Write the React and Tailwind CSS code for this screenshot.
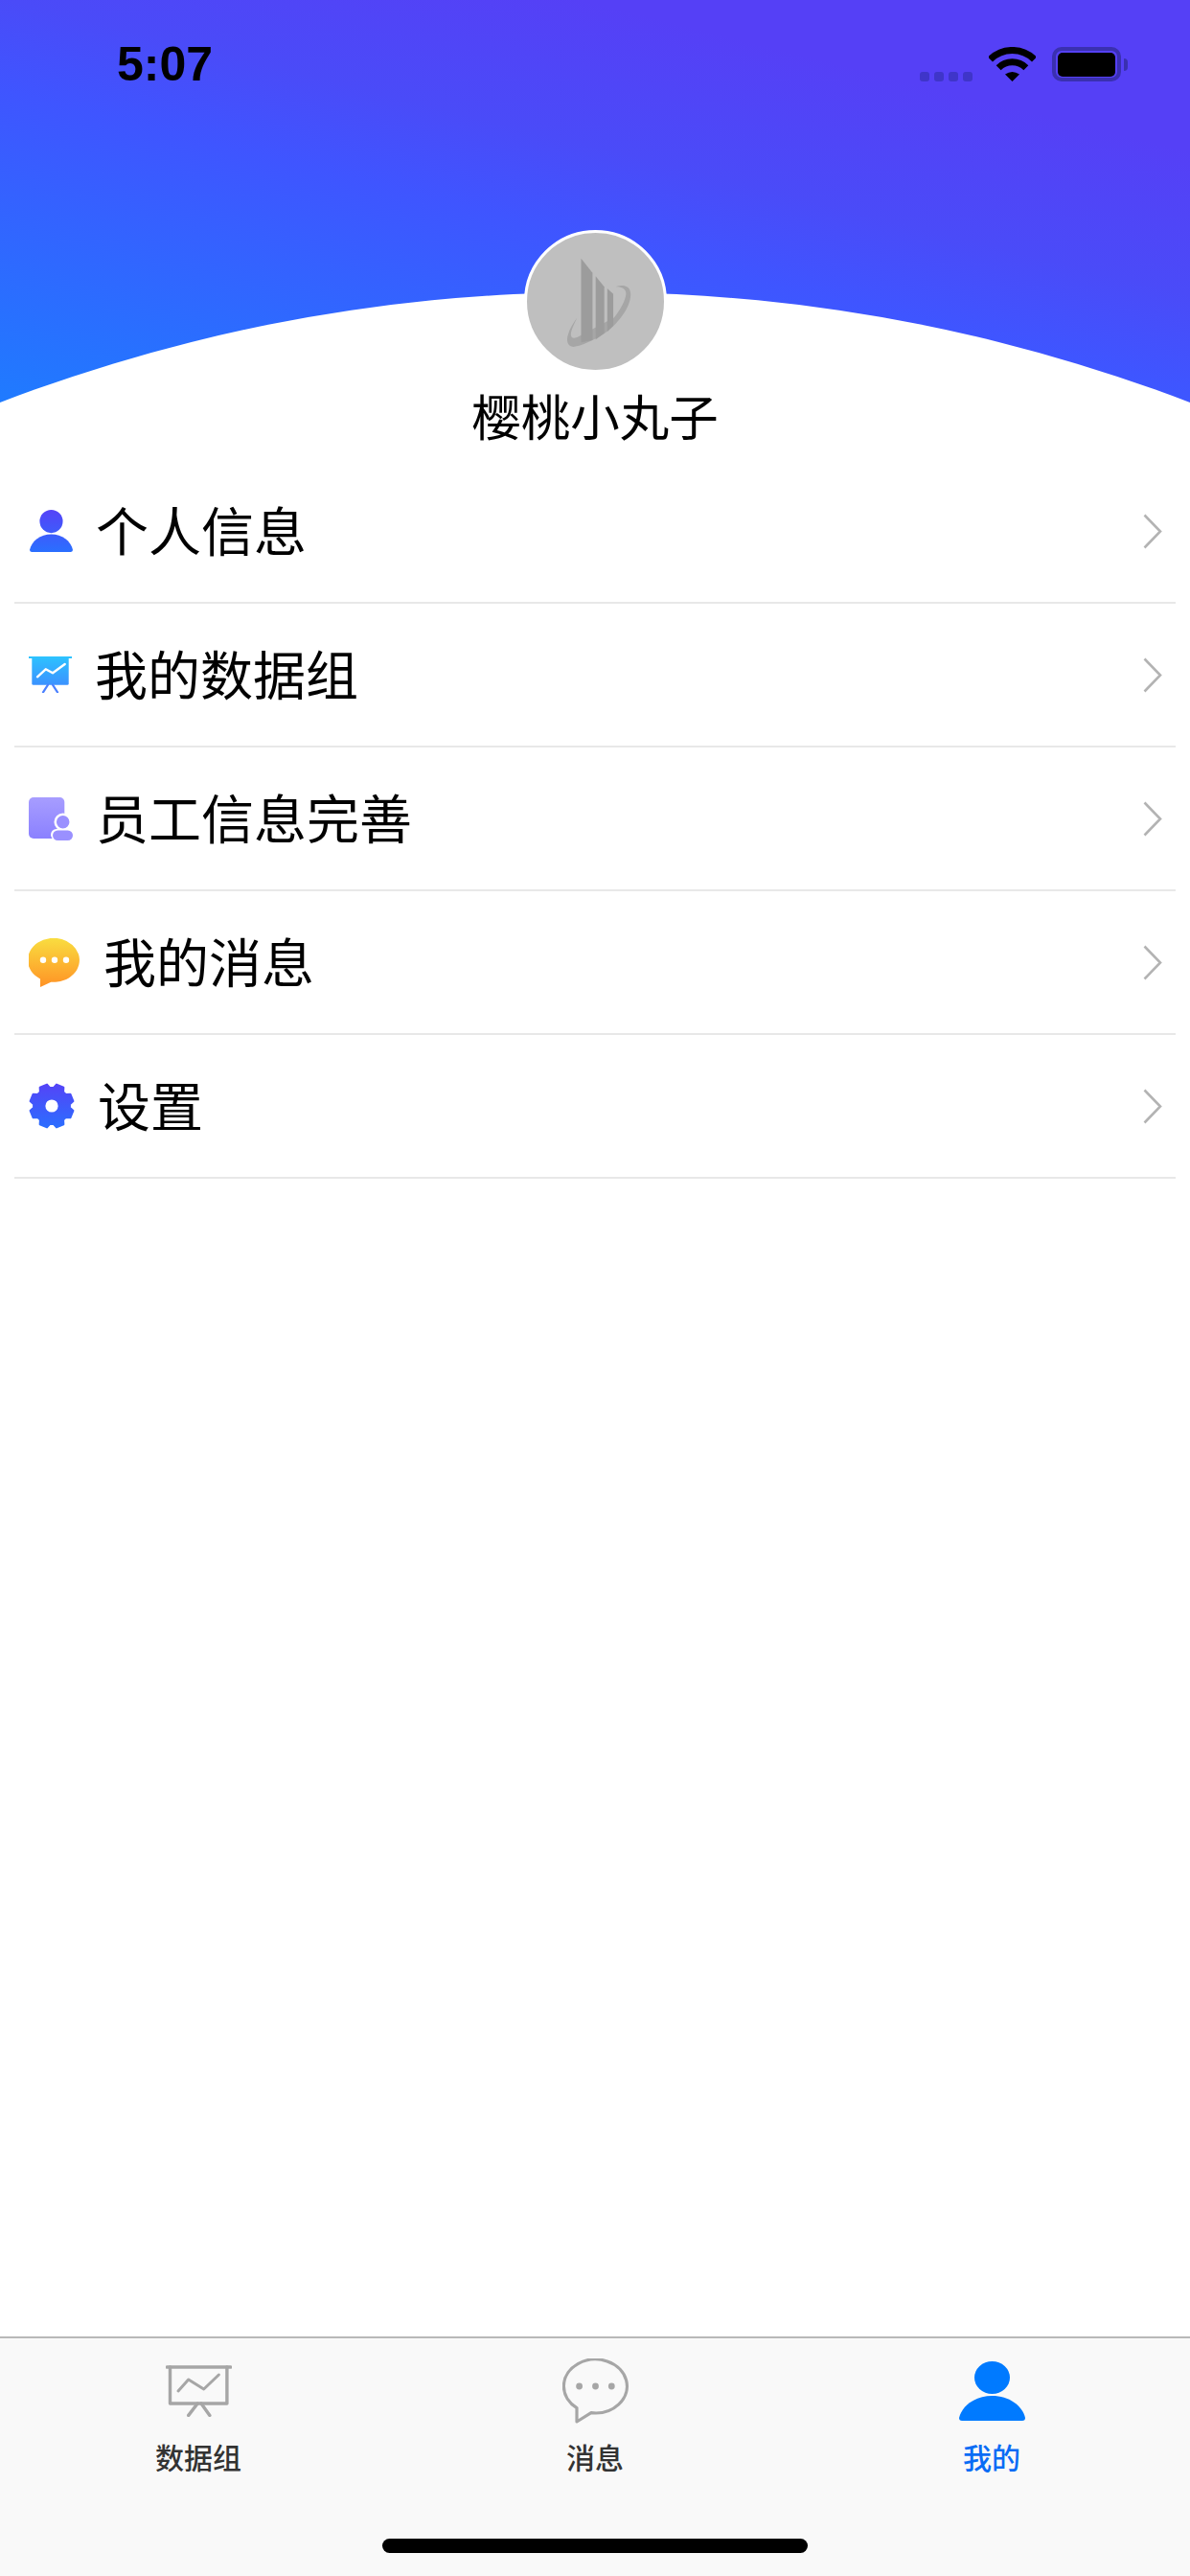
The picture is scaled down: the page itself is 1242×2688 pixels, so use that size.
import { useId } from "react"

const CJK = "font-['Noto_Sans_CJK_SC','Noto_Sans',sans-serif]"

// gear outline: 8 teeth, root radius 19, tip radius 23
const GEAR_PATH = (() => {
  const pts = []
  for (let k = 0; k < 8; k++) {
    const mid = 22.5 + 45 * k
    const offs = [[-17, 19], [-10, 23], [10, 23], [17, 19]]
    for (const [da, r] of offs) {
      const a = ((mid + da) * Math.PI) / 180
      pts.push(`${(24 + r * Math.sin(a)).toFixed(2)} ${(24 - r * Math.cos(a)).toFixed(2)}`)
    }
  }
  return `M${pts.join("L")}Z`
})()

function Grad({ id, from, to, h }) {
  return (
    <defs>
      <linearGradient id={id} gradientUnits="userSpaceOnUse" x1="0" y1="0" x2="0" y2={h}>
        <stop offset="0" stopColor={from} />
        <stop offset="1" stopColor={to} />
      </linearGradient>
    </defs>
  )
}

function PersonShape({ fill }) {
  return (
    <g fill={fill}>
      <ellipse cx="34.5" cy="17" rx="18.5" ry="17" />
      <path d="M0 59C3 46 17 36 34.5 36C52 36 66 46 69 59Q69 62 66 62H3Q0 62 0 59Z" />
    </g>
  )
}

function UserIcon() {
  const id = useId()
  return (
    <svg width="46" height="44" viewBox="-1.5 0 70.5 62" preserveAspectRatio="none">
      <Grad id={id} from="#5543f7" to="#2a6fff" h={62} />
      <PersonShape fill={`url(#${id})`} />
    </svg>
  )
}

function BoardIcon() {
  const id = useId()
  return (
    <svg width="45" height="38" viewBox="0 0 45 38">
      <Grad id={id} from="#2dc2ff" to="#3f85ff" h={38} />
      <rect x="0" y="0" width="45" height="2" fill="#2dc2ff" />
      <path d="M3.3 2H41.7V28.2Q41.7 29.7 40.2 29.7H4.8Q3.3 29.7 3.3 28.2Z" fill={`url(#${id})`} />
      <path d="M9 21.3L17.7 13.3L25 17.3L37.7 8" fill="none" stroke="#fff" strokeWidth="2.4" strokeLinecap="round" strokeLinejoin="round" />
      <path d="M20 29.7L15 37.3M25 29.7L30 37.3" fill="none" stroke="#4a80ff" strokeWidth="2.2" strokeLinecap="round" />
    </svg>
  )
}

function StaffIcon() {
  const id = useId()
  return (
    <svg width="46" height="45" viewBox="0 0 46 45">
      <Grad id={id} from="#a79dff" to="#8a80ff" h={44} />
      <rect x="0" y="0" width="37.3" height="43" rx="5" fill={`url(#${id})`} />
      <circle cx="35.7" cy="25.7" r="8" fill="#9a90ff" stroke="#fff" strokeWidth="2.5" />
      <rect x="23" y="33" width="23" height="12" rx="6" fill="#fff" />
      <rect x="25" y="34.6" width="21" height="10.4" rx="5.2" fill="#9a90ff" />
    </svg>
  )
}

function ChatIcon() {
  const id = useId()
  return (
    <svg width="54" height="51" viewBox="0 0 54 51">
      <Grad id={id} from="#f9dd40" to="#ff9225" h={51} />
      <path d="M12 42.5V51L23.3 45.7A27 23 0 1 0 12 42.5Z" fill={`url(#${id})`} />
      <circle cx="15" cy="22.7" r="3.2" fill="#fff" />
      <circle cx="27" cy="22.7" r="3.2" fill="#fff" />
      <circle cx="39" cy="22.7" r="3.2" fill="#fff" />
    </svg>
  )
}

function GearIcon() {
  const id = useId()
  return (
    <svg width="48" height="48" viewBox="0 0 48 48">
      <Grad id={id} from="#5543f7" to="#2a6fff" h={48} />
      <path d={GEAR_PATH} fill={`url(#${id})`} stroke={`url(#${id})`} strokeWidth="2" strokeLinejoin="round" />
      <circle cx="24" cy="24" r="6.6" fill="#fff" />
    </svg>
  )
}

function Chevron() {
  return (
    <svg width="20" height="37" viewBox="0 0 20 37" className="shrink-0">
      <path d="M1.5 1.5L18 18.5L1.5 35.5" fill="none" stroke="#b3b3b3" strokeWidth="2.6" />
    </svg>
  )
}

function TabBoard() {
  return (
    <svg width="69" height="54" viewBox="0 0 69 54" fill="none" stroke="#a6a6a6" strokeLinecap="round" strokeLinejoin="round">
      <path d="M1.5 2H67.5" strokeWidth="3.6" />
      <path d="M4.5 2V40H63.9V2" strokeWidth="3.4" />
      <path d="M13 27L23.7 15L39.7 25L55.4 10" strokeWidth="3" />
      <path d="M33.2 40L23.7 52.4M37 40L45.9 52.4" strokeWidth="3.4" />
    </svg>
  )
}

function TabChat() {
  return (
    <svg width="69" height="68" viewBox="0 0 69 68">
      <path d="M15 51.6V66L30 56.7A33 28 0 1 0 15 51.6Z" fill="none" stroke="#a6a6a6" strokeWidth="3.2" strokeLinejoin="round" />
      <circle cx="17.6" cy="29" r="3.4" fill="#a6a6a6" />
      <circle cx="34.5" cy="29" r="3.4" fill="#a6a6a6" />
      <circle cx="51.3" cy="29" r="3.4" fill="#a6a6a6" />
    </svg>
  )
}

function TabUser() {
  return (
    <svg width="69" height="62" viewBox="0 0 69 62">
      <PersonShape fill="#007aff" />
    </svg>
  )
}

function Wifi() {
  return (
    <svg width="49" height="36" viewBox="0 0 49 36" fill="none" stroke="#000" strokeWidth="7">
      <path d="M1.5 13A32.5 32.5 0 0 1 47.5 13" />
      <path d="M10.15 21.65A20.3 20.3 0 0 1 38.85 21.65" />
      <path d="M24.5 36L17 28.5Q24.5 23.5 32 28.5Z" fill="#000" stroke="none" />
    </svg>
  )
}

function Logo() {
  return (
    <svg width="148" height="148" viewBox="0 0 148 148" fill="#9c9c9c">
      <path
        d="M95.8 57.8C103 55 112 56 112 66C112 80 98 98 85 107C70 117 58 121 51 122.5C44 123 42 116 44.5 109C46 103 50 97 54.2 91C51 98 47 105 47.5 110C48 114 52 114 58.5 110L94 91C100 84 107 72 107 65C107 60 102 57.5 95.8 57.8Z"
        fill="#a6a6a6"
      />
      <path d="M58.5 27.2L70.8 42.8V115.5L58.5 117.8Z" />
      <path d="M74.2 46.2L83.5 57.8V107.8L74.2 114.5Z" />
      <path d="M86.8 59.5L93.2 65.5V99.5L86.8 106.2Z" />
    </svg>
  )
}

const ROWS = [
  { label: "个人信息", icon: <UserIcon /> },
  { label: "我的数据组", icon: <BoardIcon /> },
  { label: "员工信息完善", icon: <StaffIcon /> },
  { label: "我的消息", icon: <ChatIcon /> },
  { label: "设置", icon: <GearIcon /> },
]

const TABS = [
  { label: "数据组", icon: <TabBoard />, color: "text-[#333333]" },
  { label: "消息", icon: <TabChat />, color: "text-[#333333]" },
  { label: "我的", icon: <TabUser />, color: "text-[#0a6cf5]" },
]

export default function App() {
  return (
    <div className={`flex h-[2688px] w-[1242px] flex-col overflow-hidden bg-white ${CJK}`}>
      {/* Header with curve */}
      <header className="relative h-[480px] shrink-0 overflow-hidden bg-[linear-gradient(14deg,#1f7bff_7.5%,#3f55ff_49%,#4a4bf8_61%,#5540f6_80%,#5540f6_100%)]">
        <div className="absolute left-1/2 top-[305px] h-[3468px] w-[3468px] -translate-x-1/2 rounded-full bg-white" />

        <div className="relative flex flex-col items-center">
          <div className="flex h-[85px] w-full items-end justify-between pl-[122px] pr-[65px]">
            <span className="font-['Liberation_Sans',sans-serif] text-[50px] font-bold leading-[36px] text-black">5:07</span>
            <div className="flex items-end">
              <div className="mr-[17px] flex gap-[5px]">
                <div className="h-[10px] w-[10px] rounded-[3px] bg-[#3f35c9]" />
                <div className="h-[10px] w-[10px] rounded-[3px] bg-[#3f35c9]" />
                <div className="h-[10px] w-[10px] rounded-[3px] bg-[#3f35c9]" />
                <div className="h-[10px] w-[10px] rounded-[3px] bg-[#3f35c9]" />
              </div>
              <Wifi />
              <div className="ml-[17px] flex h-[36px] w-[72px] items-center justify-center rounded-[10px] border-[4px] border-[#3a30b0]">
                <div className="h-[25px] w-[60px] rounded-[5px] bg-black" />
              </div>
              <div className="mb-[11px] ml-[3px] h-[13px] w-[4px] rounded-r-[4px] bg-[#3a30b0]" />
            </div>
          </div>

          <div className="mt-[155px] flex h-[149px] w-[149px] items-center justify-center rounded-full border-[3px] border-white bg-[#bfbfbf]">
            <Logo />
          </div>
          <div className="mt-[14px] text-[51.5px] leading-[60px] text-black">樱桃小丸子</div>
        </div>
      </header>

      {/* Menu */}
      <div className="flex flex-col px-[15px]">
        {ROWS.map((row) => (
          <div key={row.label} className="flex h-[150px] items-center border-b-2 border-[#e8e8e8] pl-[15px] pr-[14px]">
            <div className="mr-[24px] shrink-0">{row.icon}</div>
            <span className="pb-[6px] text-[55px] leading-none text-black">{row.label}</span>
            <div className="ml-auto">
              <Chevron />
            </div>
          </div>
        ))}
      </div>

      <div className="flex-1" />

      {/* Tab bar */}
      <nav className="relative h-[250px] shrink-0 border-t-2 border-[#b8b8b8] bg-[#f9f9f9]">
        <div className="grid grid-cols-3 pt-[21px]">
          {TABS.map((tab) => (
            <div key={tab.label} className="flex flex-col items-center">
              <div className="flex h-[68px] items-center">{tab.icon}</div>
              <span className={`mt-[19px] text-[30px] font-medium leading-[30px] ${tab.color}`}>{tab.label}</span>
            </div>
          ))}
        </div>
        <div className="absolute bottom-[24px] left-[399px] h-[15px] w-[444px] rounded-full bg-black" />
      </nav>
    </div>
  )
}
